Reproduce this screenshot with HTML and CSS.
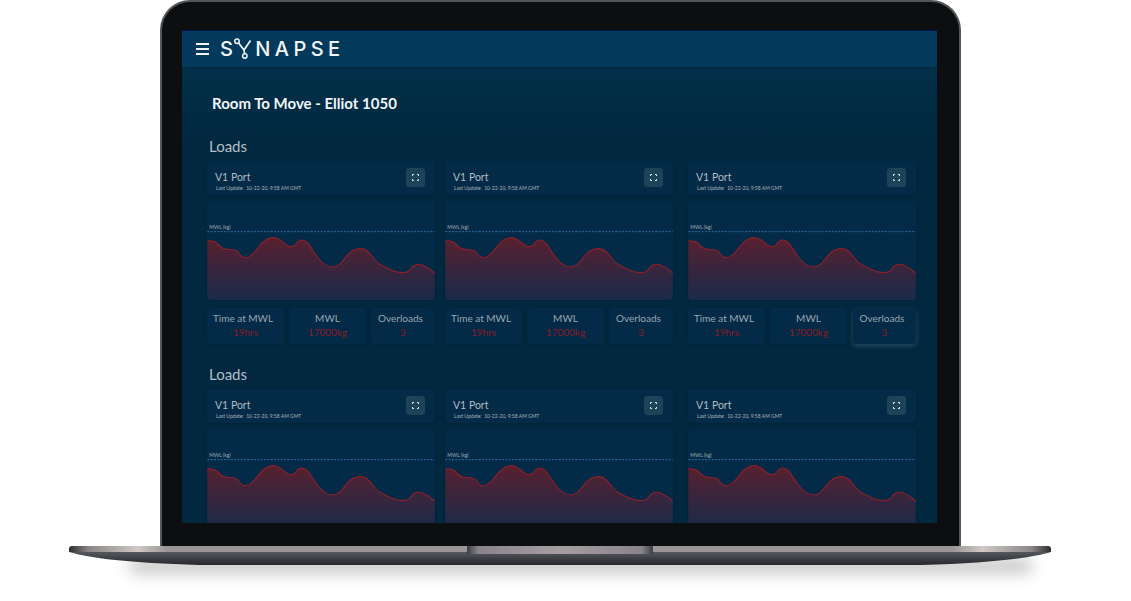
FILE: index.html
```html
<!DOCTYPE html>
<html lang="en">
<head>
<meta charset="utf-8">
<title>Synapse</title>
<link rel="stylesheet" href="styles.css">
</head>
<body>
<svg class="defs" width="0" height="0" aria-hidden="true">
  <defs>
    <linearGradient id="area" x1="0" y1="0" x2="0" y2="1">
      <stop offset="0" stop-color="#58202f"/>
      <stop offset="1" stop-color="#1a2a4a"/>
    </linearGradient>
    <symbol id="chart" viewBox="20 15 682 297">
      <text class="mwl" x="26" y="99">MWL (kg)</text>
      <line x1="20" y1="107" x2="702" y2="107" stroke="#2f6d9e" stroke-width="3" stroke-dasharray="6 4"/>
      <path fill="url(#area)" d="M20 135 C32 134 40 135 48 141 C58 151 62 159 78 160 C92 161 105 160 111 167 C118 176 120 185 132 185 C150 185 160 170 176 150 C188 135 200 125 218 125 C236 125 245 140 262 150 C272 154 280 152 285 145 C290 136 296 132 303 132 C322 132 332 160 350 183 C364 202 380 213 397 213 C418 213 428 190 445 172 C458 160 470 158 482 158 C505 158 515 188 535 203 C555 215 580 229 605 230 C625 231 628 220 638 210 C648 203 660 204 670 209 C685 215 695 226 702 232 V312 H20 Z"/>
      <path fill="none" stroke="#8c1f2b" stroke-width="3.5" d="M20 135 C32 134 40 135 48 141 C58 151 62 159 78 160 C92 161 105 160 111 167 C118 176 120 185 132 185 C150 185 160 170 176 150 C188 135 200 125 218 125 C236 125 245 140 262 150 C272 154 280 152 285 145 C290 136 296 132 303 132 C322 132 332 160 350 183 C364 202 380 213 397 213 C418 213 428 190 445 172 C458 160 470 158 482 158 C505 158 515 188 535 203 C555 215 580 229 605 230 C625 231 628 220 638 210 C648 203 660 204 670 209 C685 215 695 226 702 232"/>
    </symbol>
    <symbol id="expand" viewBox="0 0 7 7">
      <path d="M0.5 2V0.5H2M5 0.5H6.5V2M6.5 5V6.5H5M2 6.5H0.5V5" fill="none" stroke="#dfe6ea" stroke-width="1"/>
    </symbol>
  </defs>
</svg>
<div class="laptop">
  <div class="lid">
    <main class="screen">
      <header class="appbar">
        <div class="burger"><span></span><span></span><span></span></div>
        <div class="logo">S<svg class="logo-y" viewBox="0 0 22 22"><path d="M6.6 5 L12 12 L18.5 2.5 M12 12 L12.6 15.5" fill="none" stroke="#f1f5f7" stroke-width="1.7"/><circle cx="5" cy="3.2" r="2.2" fill="none" stroke="#f1f5f7" stroke-width="1.5"/><circle cx="12.8" cy="18" r="2.2" fill="none" stroke="#f1f5f7" stroke-width="1.5"/></svg>NAPSE</div>
      </header>
      <div class="content">
        <h1 class="page-title">Room To Move - Elliot 1050</h1>

        <section class="section">
          <h2 class="section-title">Loads</h2>
          <div class="columns">
            <article class="col">
              <div class="panel head"><div><div class="port">V1 Port</div><div class="update">Last Update:&nbsp; 10-22-20, 9:58 AM GMT</div></div><button class="expand"><svg><use href="#expand"/></svg></button></div>
              <div class="panel chart"><svg><use href="#chart"/></svg></div>
              <div class="stats">
                <div class="panel stat wide"><div class="label nudged">Time at MWL</div><div class="value">19hrs</div></div>
                <div class="panel stat wide"><div class="label">MWL</div><div class="value">17000kg</div></div>
                <div class="panel stat narrow"><div class="label nudged">Overloads</div><div class="value">3</div></div>
              </div>
            </article>
            <article class="col">
              <div class="panel head"><div><div class="port">V1 Port</div><div class="update">Last Update:&nbsp; 10-22-20, 9:58 AM GMT</div></div><button class="expand"><svg><use href="#expand"/></svg></button></div>
              <div class="panel chart"><svg><use href="#chart"/></svg></div>
              <div class="stats">
                <div class="panel stat wide"><div class="label nudged">Time at MWL</div><div class="value">19hrs</div></div>
                <div class="panel stat wide"><div class="label">MWL</div><div class="value">17000kg</div></div>
                <div class="panel stat narrow"><div class="label nudged">Overloads</div><div class="value">3</div></div>
              </div>
            </article>
            <article class="col last">
              <div class="panel head"><div><div class="port">V1 Port</div><div class="update">Last Update:&nbsp; 10-22-20, 9:58 AM GMT</div></div><button class="expand"><svg><use href="#expand"/></svg></button></div>
              <div class="panel chart"><svg><use href="#chart"/></svg></div>
              <div class="stats">
                <div class="panel stat wide"><div class="label nudged">Time at MWL</div><div class="value">19hrs</div></div>
                <div class="panel stat wide"><div class="label">MWL</div><div class="value">17000kg</div></div>
                <div class="panel stat narrow raised"><div class="label nudged">Overloads</div><div class="value">3</div></div>
              </div>
            </article>
          </div>
        </section>

        <section class="section">
          <h2 class="section-title">Loads</h2>
          <div class="columns">
            <article class="col">
              <div class="panel head"><div><div class="port">V1 Port</div><div class="update">Last Update:&nbsp; 10-22-20, 9:58 AM GMT</div></div><button class="expand"><svg><use href="#expand"/></svg></button></div>
              <div class="panel chart"><svg><use href="#chart"/></svg></div>
            </article>
            <article class="col">
              <div class="panel head"><div><div class="port">V1 Port</div><div class="update">Last Update:&nbsp; 10-22-20, 9:58 AM GMT</div></div><button class="expand"><svg><use href="#expand"/></svg></button></div>
              <div class="panel chart"><svg><use href="#chart"/></svg></div>
            </article>
            <article class="col last">
              <div class="panel head"><div><div class="port">V1 Port</div><div class="update">Last Update:&nbsp; 10-22-20, 9:58 AM GMT</div></div><button class="expand"><svg><use href="#expand"/></svg></button></div>
              <div class="panel chart"><svg><use href="#chart"/></svg></div>
            </article>
          </div>
        </section>
      </div>
    </main>
  </div>
  <svg class="base" viewBox="0 0 982 20" width="982" height="20">
    <defs>
      <linearGradient id="baseTop" x1="0" y1="0" x2="1" y2="0">
        <stop offset="0" stop-color="#2c2d30"/>
        <stop offset="0.02" stop-color="#8a8587"/>
        <stop offset="0.07" stop-color="#d0c9c4"/>
        <stop offset="0.1" stop-color="#9a9597"/>
        <stop offset="0.9" stop-color="#9a9597"/>
        <stop offset="0.93" stop-color="#d0c9c4"/>
        <stop offset="0.98" stop-color="#8a8587"/>
        <stop offset="1" stop-color="#2c2d30"/>
      </linearGradient>
      <linearGradient id="baseBot" x1="0" y1="0" x2="0" y2="1">
        <stop offset="0" stop-color="#54575c"/>
        <stop offset="1" stop-color="#25272b"/>
      </linearGradient>
      <linearGradient id="notch" x1="0" y1="0" x2="1" y2="0">
        <stop offset="0" stop-color="#3c3c40"/>
        <stop offset="0.06" stop-color="#88848a"/>
        <stop offset="0.5" stop-color="#a69fa2"/>
        <stop offset="0.94" stop-color="#88848a"/>
        <stop offset="1" stop-color="#3c3c40"/>
      </linearGradient>
    </defs>
    <path fill="url(#baseBot)" d="M0 6 C20 12 60 17 130 19 H852 C922 17 962 12 982 6 Z"/>
    <path fill="url(#baseTop)" d="M3 0 H979 Q982 0 982 3 V6 H0 V3 Q0 0 3 0 Z"/>
    <rect x="398" y="0" width="186" height="8" fill="url(#notch)"/>
  </svg>
</div>
</body>
</html>
```
FILE: styles.css
```css
* { box-sizing: border-box; }
html, body { margin: 0; padding: 0; background: #fff; }
body { width: 1131px; height: 601px; overflow: hidden; font-family: "Lato", "Noto Sans", sans-serif; }
.defs { position: absolute; }
.mwl { font: 15px "Lato", sans-serif; fill: #a4afb8; }

.laptop { position: relative; width: 1131px; height: 601px; display: flex; flex-direction: column; align-items: flex-start; }
.laptop::before { content: ""; position: absolute; left: 130px; right: 100px; top: 560px; height: 12px; background: rgba(0,0,0,.28); filter: blur(8px); }
.laptop::after { content: ""; position: absolute; left: 20px; right: 20px; top: 525px; height: 50px; background: rgba(0,0,0,.05); filter: blur(20px); z-index: -1; }

.lid { position: relative; width: 801px; height: 547px; margin-left: 160px; padding: 28px 22px 22px 20px; background: #0c0e0f; border: 2px solid #53575a; border-bottom: 0; border-radius: 30px 30px 0 0; }
.base { position: relative; margin-top: -1px; margin-left: 69px; flex: none; }

.screen { width: 755px; height: 493px; overflow: hidden; border-top: 1px solid #02144a; background: linear-gradient(#03344f 0, #01283f 110px, #01283f 100%); display: flex; flex-direction: column; }
.appbar { height: 36px; flex: none; background: #033a5c; display: flex; align-items: center; padding-left: 14px; box-shadow: 0 1px 3px rgba(0,0,0,.2); }
.burger { width: 13px; display: flex; flex-direction: column; gap: 3px; }
.burger span { display: block; height: 2px; background: #f1f5f7; }
.logo { margin-left: 11px; display: flex; align-items: center; color: #f1f5f7; font: 500 20px/22px "Inter", sans-serif; letter-spacing: 4.4px; }
.logo-y { width: 22px; height: 22px; margin-left: -5px; margin-right: 1px; }

.content { padding: 26px 22px 0 25px; }
.page-title { margin: 0 0 0 5px; font: 700 15px/20px "Lato", sans-serif; color: #f2f5f7; }
.section { margin-top: 20px; }
.page-title + .section { margin-top: 23px; }
.section-title { margin: 0 0 5px 2px; font: 400 15px/20px "Lato", sans-serif; color: #b4bec6; }
.columns { display: flex; gap: 10px; }
.col { width: 228px; flex: none; display: flex; flex-direction: column; gap: 6px; }
.col.last { margin-left: 5px; }

.panel { background: #032a46; border-radius: 4px; box-shadow: 0 1px 3px rgba(0,0,0,.12); }
.head { height: 34px; display: flex; align-items: center; justify-content: space-between; padding: 0 10px 0 8px; }
.port { font-size: 10.5px; line-height: 13px; color: #b0bbc3; padding-top: 6px; box-sizing: content-box; }
.update { font-size: 5px; line-height: 7px; color: #aab5bd; margin-left: 1px; margin-top: 1px; white-space: nowrap; }
.expand { width: 19px; height: 19px; padding: 6px; border: 0; border-radius: 3px; background: #1d4359; display: block; margin-top: -1px; }
.expand svg { display: block; width: 7px; height: 7px; }
.chart { height: 99px; overflow: hidden; }
.chart svg { display: block; width: 228px; height: 99px; }

.stats { display: flex; gap: 5px; margin-top: 2px; }
.stat { height: 36px; text-align: center; padding-top: 2px; }
.wide { width: 77px; }
.narrow { width: 64px; }
.raised { margin-left: 1px; width: 63px; box-shadow: 0 2px 5px rgba(160,180,190,.25); }
.label { font-size: 10px; line-height: 16px; color: #9aa7b1; white-space: nowrap; }
.label.nudged { padding-right: 5px; }
.value { font-size: 10px; line-height: 13px; color: #861d28; }
```
